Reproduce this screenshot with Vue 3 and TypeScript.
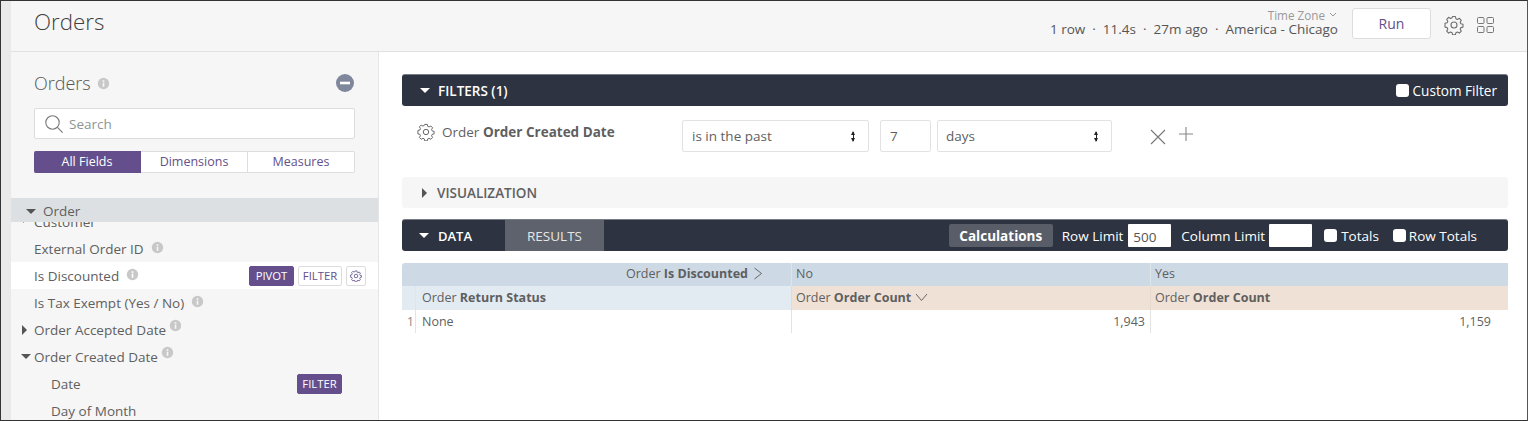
<script setup lang="ts">
const infoPath = 'M8 1a7 7 0 1 0 0 14A7 7 0 0 0 8 1z';
const gearPath = 'M8.6 1.5h2.8l.5 2.2 1.5.7 2-1.1 1.9 2-1.1 1.9.6 1.6 2.2.5v2.8l-2.2.5-.6 1.6 1.1 1.9-1.9 2-2-1.1-1.5.7-.5 2.2H8.6l-.5-2.2-1.5-.7-2 1.1-1.9-2 1.1-1.9-.6-1.6-2.2-.5V8.3l2.2-.5.6-1.6-1.1-1.9 1.9-2 2 1.1 1.5-.7z';
</script>

<template>
  <div class="page">
    <div class="strip"></div>
    <div class="app">
      <header class="top">
        <h1 class="title">Orders</h1>
        <div class="status">
          <div class="tz">Time Zone <svg width="8" height="6" viewBox="0 0 8 6"><path d="M1 1l3 3 3-3" fill="none" stroke="#999" /></svg></div>
          <div class="meta">1 row &nbsp;·&nbsp; 11.4s &nbsp;·&nbsp; 27m ago &nbsp;·&nbsp; America - Chicago</div>
        </div>
        <button class="run">Run</button>
        <svg class="gear-top" width="20" height="20" viewBox="0 0 20 20"><path :d="gearPath" fill="none" stroke="#6f6f6f" stroke-width="1.1" stroke-linejoin="round" /><circle cx="10" cy="10" r="3" fill="none" stroke="#6f6f6f" stroke-width="1.1" /></svg>
        <svg class="grid-ic" width="17" height="16" viewBox="0 0 17 16"><g fill="none" stroke="#777" stroke-width="1"><rect x="0.5" y="0.5" width="6.5" height="6" rx="1" /><rect x="10" y="0.5" width="6.5" height="6" rx="1" /><rect x="0.5" y="9.5" width="6.5" height="6" rx="1" /><rect x="10" y="9.5" width="6.5" height="6" rx="1" /></g></svg>
      </header>

      <div class="body">
        <aside class="side">
          <div class="side-head">
            <span class="side-title">Orders</span>
            <svg class="info" width="13" height="13" viewBox="0 0 16 16"><path :d="infoPath" fill="#c8c8c8" /><rect x="7" y="7" width="2" height="5" fill="#f6f6f6" /><rect x="7" y="4" width="2" height="2" fill="#f6f6f6" /></svg>
            <svg class="minus" width="18" height="18" viewBox="0 0 18 18"><circle cx="9" cy="9" r="9" fill="#7f879c" /><rect x="4" y="7.7" width="10" height="2.6" fill="#fff" /></svg>
          </div>
          <div class="search">
            <svg width="20" height="20" viewBox="0 0 20 20"><circle cx="8.5" cy="8.5" r="6.7" fill="none" stroke="#777" stroke-width="1.1" /><path d="M13.4 13.4l5.2 5.2" stroke="#777" stroke-width="1.1" /></svg>
            <span>Search</span>
          </div>
          <div class="tabs">
            <span class="tab on">All Fields</span>
            <span class="tab">Dimensions</span>
            <span class="tab">Measures</span>
          </div>
          <div class="group"><span class="caret-d"></span>Order</div>
          <div class="list">
            <div class="row"><span class="caret-r small"></span>Customer</div>
            <div class="row">External Order ID<svg class="info gap" width="13" height="13" viewBox="0 0 16 16"><path :d="infoPath" fill="#c8c8c8" /><rect x="7" y="7" width="2" height="5" fill="#f6f6f6" /><rect x="7" y="4" width="2" height="2" fill="#f6f6f6" /></svg></div>
            <div class="row hover">
              Is Discounted<svg class="info gap" width="13" height="13" viewBox="0 0 16 16"><path :d="infoPath" fill="#c8c8c8" /><rect x="7" y="7" width="2" height="5" fill="#fff" /><rect x="7" y="4" width="2" height="2" fill="#fff" /></svg>
              <span class="actions">
                <span class="pill solid w45">PIVOT</span>
                <span class="pill w44">FILTER</span>
                <span class="pill icon"><svg width="12" height="12" viewBox="0 0 20 20"><path :d="gearPath" fill="none" stroke="#64508a" stroke-width="1.4" /><circle cx="10" cy="10" r="3" fill="none" stroke="#64508a" stroke-width="1.4" /></svg></span>
              </span>
            </div>
            <div class="row">Is Tax Exempt (Yes / No)<svg class="info gap" width="13" height="13" viewBox="0 0 16 16"><path :d="infoPath" fill="#c8c8c8" /><rect x="7" y="7" width="2" height="5" fill="#f6f6f6" /><rect x="7" y="4" width="2" height="2" fill="#f6f6f6" /></svg></div>
            <div class="row"><span class="caret-r"></span>Order Accepted Date<svg class="info raised" width="13" height="13" viewBox="0 0 16 16"><path :d="infoPath" fill="#c8c8c8" /><rect x="7" y="7" width="2" height="5" fill="#f6f6f6" /><rect x="7" y="4" width="2" height="2" fill="#f6f6f6" /></svg></div>
            <div class="row"><span class="caret-d tight"></span>Order Created Date<svg class="info raised" width="13" height="13" viewBox="0 0 16 16"><path :d="infoPath" fill="#c8c8c8" /><rect x="7" y="7" width="2" height="5" fill="#f6f6f6" /><rect x="7" y="4" width="2" height="2" fill="#f6f6f6" /></svg></div>
            <div class="row sub">Date<span class="actions single"><span class="pill solid w45">FILTER</span></span></div>
            <div class="row sub">Day of Month</div>
          </div>
        </aside>

        <main class="main">
          <section class="bar filters-bar">
            <span class="caret-d white"></span>
            <strong>FILTERS (1)</strong>
            <label class="check end"><i></i>Custom Filter</label>
          </section>

          <div class="filter-row">
            <div class="filter-name">
              <svg width="18" height="18" viewBox="0 0 20 20"><path :d="gearPath" fill="none" stroke="#666" stroke-width="1.1" stroke-linejoin="round" /><circle cx="10" cy="10" r="3" fill="none" stroke="#666" stroke-width="1.1" /></svg>
              <span>Order <b>Order Created Date</b></span>
            </div>
            <div class="select w-op">is in the past<span class="updown"></span></div>
            <div class="select w-num">7</div>
            <div class="select w-unit">days<span class="updown"></span></div>
            <svg class="x" width="16" height="16" viewBox="0 0 16 16"><path d="M1 1l14 14M15 1L1 15" stroke="#777" stroke-width="1.1" fill="none" /></svg>
            <svg class="plus" width="14" height="14" viewBox="0 0 14 14"><path d="M7 0v14M0 7h14" stroke="#888" stroke-width="1.1" fill="none" /></svg>
          </div>

          <section class="viz"><span class="caret-r"></span>VISUALIZATION</section>

          <section class="bar data-bar">
            <div class="data-label"><span class="caret-d white"></span><strong>DATA</strong></div>
            <div class="results">RESULTS</div>
            <div class="data-tools">
              <span class="calc">Calculations</span>
              <label class="lim first">Row Limit <span class="lim-box">500</span></label>
              <label class="lim col">Column Limit <span class="lim-box"></span></label>
              <label class="check totals"><i></i>Totals</label>
              <label class="check rowtotals"><i></i>Row Totals</label>
            </div>
          </section>

          <div class="table">
            <div class="c h1 span2 right">Order&nbsp;<b>Is Discounted</b><svg width="10" height="13" viewBox="0 0 10 13"><path d="M1.5 1l7 5.5-7 5.5" fill="none" stroke="#666" /></svg></div>
            <div class="c h1 sep">No</div>
            <div class="c h1 sep">Yes</div>
            <div class="c h2 idx"></div>
            <div class="c h2">Order&nbsp;<b>Return Status</b></div>
            <div class="c h3 sep">Order&nbsp;<b>Order Count</b><svg class="down" width="13" height="9" viewBox="0 0 13 9"><path d="M1 1l5.5 6.5L12 1" fill="none" stroke="#666" /></svg></div>
            <div class="c h3 sep">Order&nbsp;<b>Order Count</b></div>
            <div class="c idx num-idx">1</div>
            <div class="c lb">None</div>
            <div class="c lb num">1,943</div>
            <div class="c lb num pad">1,159</div>
          </div>
        </main>
      </div>
    </div>
  </div>
</template>

<style>
html, body { margin: 0; background: #fff; }
</style>

<style scoped>
* { box-sizing: border-box; }
.page {
  width: 1528px; height: 421px; display: flex; overflow: hidden;
  border: 1px solid #333; border-right-color: #555;
  font-family: "Open Sans", "Liberation Sans", sans-serif; font-size: 13.5px; color: #5f5f5f;
}
.strip { width: 10px; flex: none; background: #e9e9e9; }
.app { flex: 1; min-width: 0; display: flex; flex-direction: column; }
.top {
  height: 51px; flex: none; display: flex; align-items: center;
  background: #f6f6f6; border-bottom: 1px solid #e1e1e1; padding: 0 33px 0 23px;
}
.title { margin: 0 0 8px; font-size: 22.3px; font-weight: 300; color: #404040; line-height: 32px; }
.status { margin-left: auto; align-self: flex-start; text-align: right; display: flex; flex-direction: column; padding-top: 7px; }
.tz { font-size: 11.7px; color: #999; line-height: 15px; padding-right: 1px; }
.tz svg { margin-left: 1px; vertical-align: 2px; }
.meta { font-size: 13.5px; line-height: 13px; color: #555; }
.run {
  width: 79px; height: 31px; margin: 0 0 5px 14px; background: #fff; border: 1px solid #ddd; border-radius: 3px;
  font: 14px "Open Sans", sans-serif; color: #64508a; padding: 0;
}
.gear-top { margin: 0 0 3px 13px; }
.grid-ic { margin: 0 0 3px 13px; }
.body { flex: 1; min-height: 0; display: flex; }
.side {
  width: 368px; flex: none; background: #f6f6f6; border-right: 1px solid #e6e6e6;
  display: flex; flex-direction: column; overflow: hidden;
}
.side-head { display: flex; flex: none; align-items: center; height: 26px; margin: 18px 23px 0 23px; }
.side-title { font-size: 18px; font-weight: 300; color: #555; margin-bottom: 1px; }
.info { flex: none; }
.side-head .info { margin-left: 6px; }
.minus { margin-left: auto; margin-right: 1px; }
.search {
  height: 31px; flex: none; margin: 12px 23px 0 23px; display: flex; align-items: center; gap: 5px; padding-left: 9px;
  background: #fff; border: 1px solid #ddd; border-radius: 2px; color: #8a9696; font-size: 13.5px;
}
.tabs { display: flex; flex: none; height: 22px; margin: 12px 23px 0 23px; }
.tab {
  flex: 1; display: flex; align-items: center; justify-content: center; background: #fff; padding-bottom: 1px;
  border: 1px solid #ddd; border-left: 0; color: #64508a; font-size: 12.5px;
}
.tab:last-child { border-radius: 0 2px 2px 0; }
.tab.on { background: #644f8c; border-color: #644f8c; color: #fff; border-radius: 2px 0 0 2px; }
.group {
  position: relative; z-index: 1; flex: none; height: 24px; margin-top: 25px; background: #dde0e3;
  display: flex; align-items: center; padding-left: 15px; font-size: 13.5px; padding-top: 2px;
}
.caret-d { width: 0; height: 0; border: 5px solid transparent; border-top: 5px solid #555; border-bottom: 0; margin-right: 7px; display: inline-block; flex: none; }
.caret-d.white { border-top-color: #fff; }
.caret-d.tight { position: absolute; left: 10px; top: 11px; margin: 0; }
.caret-r { width: 0; height: 0; border: 5px solid transparent; border-left: 5px solid #555; border-right: 0; display: inline-block; flex: none; }
.list { margin-top: -14px; flex: none; }
.row { position: relative; height: 27px; display: flex; align-items: center; padding-left: 23px; white-space: nowrap; color: #606060; }
.row .caret-r { position: absolute; left: 11px; top: 9px; }
.row .caret-r.small { top: 9px; border-width: 3px; border-left-width: 3px; border-right: 0; left: 12px; }
.hover { background: #fff; }
.sub { padding-left: 40px; }
.gap { margin-left: 7px; margin-top: -2px; }
.raised { margin-left: 3px; margin-top: -9px; }
.actions { margin-left: auto; margin-right: 12px; display: flex; gap: 4px; }
.actions.single { margin-right: 36px; }
.pill {
  height: 20px; display: flex; align-items: center; justify-content: center; border: 1px solid #ddd; border-radius: 2px;
  background: #fff; color: #64508a; font-size: 11.3px;
}
.w45 { width: 45px; }
.w44 { width: 44px; }
.pill.solid { background: #644f8c; border-color: #644f8c; color: #fff; }
.pill.icon { width: 20px; }
.main { flex: 1; min-width: 0; padding: 22px 19px 0 23px; display: flex; flex-direction: column; }
.bar { background: #2d3340; border-radius: 3px; color: #fff; display: flex; align-items: center; height: 32px; flex: none; border-top: 1px solid #777c87; }
.filters-bar { padding-left: 18px; }
.filters-bar .caret-d { margin-right: 8px; }
.filters-bar strong { font-weight: 600; font-size: 13.5px; }
.check { display: flex; align-items: center; gap: 4px; font-size: 13.5px; white-space: nowrap; }
.check i { width: 13px; height: 13px; background: #fff; border-radius: 3px; display: block; }
.check.end { margin-left: auto; padding-right: 11px; font-size: 13.6px; }
.filter-row { height: 71px; flex: none; display: flex; align-items: flex-start; padding-top: 14px; }
.filter-name { width: 280px; display: flex; align-items: center; gap: 7px; padding-left: 15px; font-size: 13.5px; height: 20px; margin-top: 2px; }
.filter-name b { font-weight: 700; }
.select {
  height: 32px; background: #fff; border: 1px solid #e2e2e2; border-radius: 2px; display: flex; align-items: center;
  padding-left: 9px; color: #5f5f5f; position: relative;
}
.w-op { width: 187px; }
.w-num { width: 51px; margin-left: 11px; }
.w-unit { width: 175px; margin-left: 6px; padding-left: 8px; }
.updown { position: absolute; right: 14px; top: 11px; width: 1px; height: 9px; background: #222; }
.updown::before, .updown::after { content: ""; position: absolute; left: -2px; border: 2.5px solid transparent; }
.updown::before { top: -1px; border-top: 0; border-bottom: 4px solid #222; }
.updown::after { bottom: -1px; border-bottom: 0; border-top: 4px solid #222; }
.x { margin: 9px 0 0 38px; }
.plus { margin: 7px 0 0 13px; }
.viz {
  height: 31px; flex: none; background: #f6f6f6; border-radius: 3px; display: flex; align-items: center;
  padding-left: 20px; gap: 10px; font-weight: 600; font-size: 13.5px; color: #606060;
}
.data-bar { margin-top: 11px; overflow: hidden; }
.data-label { width: 103px; height: 100%; display: flex; align-items: center; padding-left: 17px; }
.data-label .caret-d { margin-right: 9px; }
.data-label strong { font-weight: 600; font-size: 13px; }
.results { width: 99px; height: 100%; background: #5d626c; display: flex; align-items: center; justify-content: center; font-size: 13.5px; color: #e6e6e6; }
.data-tools { margin-left: auto; display: flex; align-items: center; padding-right: 31px; font-size: 13.5px; }
.calc { background: #585d67; height: 23px; width: 104px; display: flex; align-items: center; justify-content: center; font-weight: 700; border-radius: 2px; }
.lim { display: flex; align-items: center; gap: 4px; white-space: nowrap; margin-left: 9px; }
.lim.first { gap: 5px; }
.lim.col { margin-left: 10px; }
.lim-box { width: 43px; height: 23px; background: #fff; color: #555; display: flex; align-items: center; padding: 2px 0 0 5px; font-size: 13.5px; border-radius: 1px; }
.totals { margin-left: 12px; }
.rowtotals { margin-left: 14px; gap: 3px; }
.table {
  margin-top: 12px; display: grid; grid-template-columns: 14px 375px 359px 358px; grid-template-rows: 23px 24px 23px;
  font-size: 12.5px; color: #5f5f5f;
}
.c { display: flex; align-items: center; padding: 0 5px 3px 6px; white-space: nowrap; min-width: 0; }
.c b { font-weight: 700; }
.h1 { background: #cdd9e5; }
.h2 { background: #e2eaf2; padding-bottom: 1px; }
.h3 { background: #efe1d5; padding-bottom: 1px; }
.span2 { grid-column: span 2; border-radius: 3px 0 0 0; }
.right { justify-content: flex-end; padding-right: 28px; }
.right svg { margin-left: 5px; }
.sep { border-left: 1px solid #dce4ec; padding-left: 4px; }
.h3.sep { border-left-color: #e6d9cd; }
.idx { border-right: 1px solid #dfe5ea; padding: 0; }
.num-idx { justify-content: center; font-size: 12px; color: #888; padding: 0 0 0 4px; }
.lb { border-left: 1px solid #e3e3e3; padding-bottom: 0; }
.lb:nth-last-child(3) { border-left: 0; padding-left: 6px; }
.num { justify-content: flex-end; }
.pad { padding-right: 17px; }
.down { margin-left: 4px; }
</style>
